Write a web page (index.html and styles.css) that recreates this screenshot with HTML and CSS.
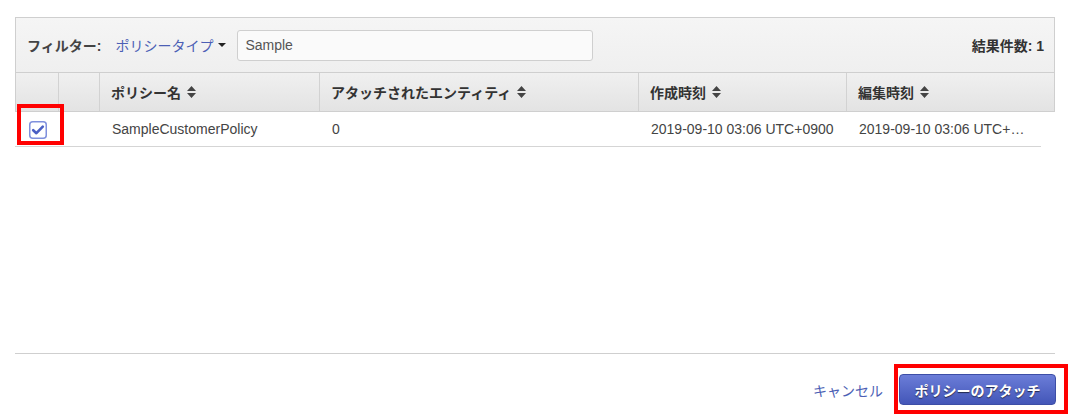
FILE: index.html
```html
<!DOCTYPE html>
<html lang="ja">
<head>
<meta charset="utf-8">
<link rel="stylesheet" href="styles.css">
</head>
<body>
<div class="page">
  <div class="panel">
    <div class="filter-bar">
      <span class="filter-label">フィルター:</span>
      <span class="filter-type">ポリシータイプ <span class="caret"></span></span>
      <div class="search">Sample</div>
      <span class="result-count">結果件数: 1</span>
    </div>
    <div class="grid head-row">
      <div class="cell"></div>
      <div class="cell"></div>
      <div class="cell th">ポリシー名 <svg class="sort" width="9" height="12" viewBox="0 0 9 12"><path d="M4.5 0L9 5H0z M0 7H9L4.5 12z" fill="#444"/></svg></div>
      <div class="cell th">アタッチされたエンティティ <svg class="sort" width="9" height="12" viewBox="0 0 9 12"><path d="M4.5 0L9 5H0z M0 7H9L4.5 12z" fill="#444"/></svg></div>
      <div class="cell th">作成時刻 <svg class="sort" width="9" height="12" viewBox="0 0 9 12"><path d="M4.5 0L9 5H0z M0 7H9L4.5 12z" fill="#444"/></svg></div>
      <div class="cell th last">編集時刻 <svg class="sort" width="9" height="12" viewBox="0 0 9 12"><path d="M4.5 0L9 5H0z M0 7H9L4.5 12z" fill="#444"/></svg></div>
    </div>
    <div class="grid data-row">
      <div class="td check-cell">
        <svg width="18" height="18" viewBox="0 0 18 18"><rect x="0.75" y="0.75" width="16.5" height="16.5" rx="3" fill="#fff" stroke="#7f90dd" stroke-width="1.5"/><path d="M4.2 9.2L7.4 12.2L13.8 5.6" fill="none" stroke="#4a5fc4" stroke-width="2.6" stroke-linecap="round" stroke-linejoin="round"/></svg>
      </div>
      <div class="td"></div>
      <div class="td">SampleCustomerPolicy</div>
      <div class="td">0</div>
      <div class="td">2019-09-10 03:06 UTC+0900</div>
      <div class="td ellipsis">2019-09-10 03:06 UTC+0900</div>
    </div>
  </div>
  <div class="footer">
    <span class="cancel">キャンセル</span>
    <span class="attach">ポリシーのアタッチ</span>
  </div>
</div>
<div class="mark mark-check"></div>
<div class="mark mark-button"></div>
</body>
</html>
```
FILE: styles.css
```css
* { box-sizing: border-box; }
body {
  margin: 0;
  background: #fff;
  font-family: "Liberation Sans", "Noto Sans CJK JP", sans-serif;
  font-size: 14px;
  color: #444;
}
.page {
  padding: 17px 20px 0 15px;
}
.panel {
  height: 336px;
}
.filter-bar {
  height: 56px;
  border: 1px solid #cfcfcf;
  background: linear-gradient(#f5f5f5, #efefef);
  display: flex;
  align-items: center;
  padding: 0 10px 0 11px;
}
.filter-label {
  font-weight: bold;
  color: #444;
  margin-right: 14px;
}
.filter-type {
  color: #4c5fb5;
  display: flex;
  align-items: center;
}
.caret {
  display: inline-block;
  width: 0;
  height: 0;
  border-left: 4px solid transparent;
  border-right: 4px solid transparent;
  border-top: 4px solid #222;
  margin-left: 5px;
}
.search {
  margin-left: 11px;
  width: 356px;
  height: 31px;
  border: 1px solid #cfcfcf;
  border-radius: 3px;
  background: #fafafa;
  color: #555;
  padding: 0 7px;
  display: flex;
  align-items: center;
}
.result-count {
  margin-left: auto;
  font-weight: bold;
  color: #333;
}
.grid {
  display: grid;
  grid-template-columns: 43px 41px 220px 319px 208px 1fr;
}
.head-row {
  height: 39px;
  background: linear-gradient(#f0f0f0, #e3e3e3);
  border-bottom: 1px solid #cfcfcf;
}
.cell {
  border-left: 1px solid #d2d2d2;
  display: flex;
  align-items: center;
  padding-left: 11px;
}
.cell:first-child { border-left-color: #cfcfcf; }
.cell.last { border-right: 1px solid #cfcfcf; }
.th {
  font-weight: bold;
  color: #333;
}
.sort { margin-left: 6px; }
.data-row {
  width: 1026px;
  height: 35px;
  grid-template-columns: 43px 41px 220px 319px 208px 195px;
  border-bottom: 1px solid #d5d5d5;
}
.td {
  display: flex;
  align-items: center;
  padding-left: 13px;
  padding-right: 8px;
  white-space: nowrap;
  overflow: hidden;
}
.ellipsis {
  display: block;
  line-height: 34px;
  text-overflow: ellipsis;
  padding-right: 16px;
}
.check-cell {
  padding-left: 14px;
  padding-top: 2px;
}
.footer {
  border-top: 1px solid #cfcfcf;
  display: flex;
  justify-content: flex-end;
  align-items: center;
  padding-top: 20px;
}
.cancel {
  color: #4c5fb5;
  margin-right: 16px;
}
.attach {
  height: 31px;
  width: 157px;
  margin-right: -1px;
  display: flex;
  align-items: center;
  justify-content: center;
  color: #fff;
  font-weight: bold;
  border: 1px solid #3d4ea6;
  border-radius: 4px;
  background: linear-gradient(#6b7dd8, #4356b8);
  text-shadow: 0 1px 1px rgba(0,0,0,0.6);
}
.mark {
  position: absolute;
  border: 4px solid #ff0000;
}
.mark-check {
  left: 17px;
  top: 104px;
  width: 47px;
  height: 41px;
}
.mark-button {
  left: 894px;
  top: 364px;
  width: 174px;
  height: 50px;
}
```
